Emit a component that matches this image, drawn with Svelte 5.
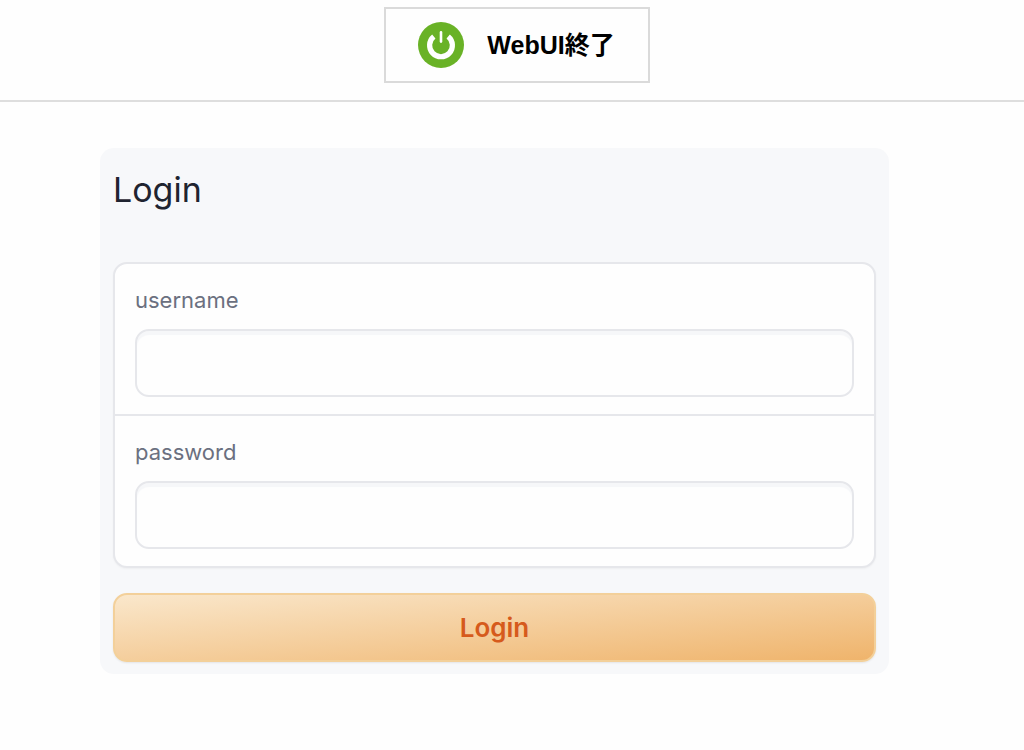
<script lang="ts">
  let username = $state('');
  let password = $state('');

  const submit = (event: SubmitEvent) => {
    event.preventDefault();
  };
</script>

<header>
  <button class="quit" type="button">
    <svg width="46" height="46" viewBox="0 0 46 46" aria-hidden="true">
      <circle cx="23" cy="23" r="23" fill="#69b226" />
      <path
        d="M15.8 14.5 A11.4 11.4 0 1 0 30.2 14.5"
        fill="none"
        stroke="#fff"
        stroke-width="5.2"
      />
      <path d="M23 10.4 V19.6" stroke="#fff" stroke-width="2.6" stroke-linecap="round" />
    </svg>
    <span>WebUI終了</span>
  </button>
</header>

<main>
  <form class="panel" onsubmit={submit}>
    <h2>Login</h2>

    <div class="fields">
      <div class="field">
        <label for="username">username</label>
        <input id="username" type="text" bind:value={username} />
      </div>
      <div class="field">
        <label for="password">password</label>
        <input id="password" type="password" bind:value={password} />
      </div>
    </div>

    <button class="login" type="submit">Login</button>
  </form>
</main>

<style>
  :global(body) {
    margin: 0;
    background: #fefefe;
    font-family: Inter, 'Noto Sans CJK JP', sans-serif;
  }

  header {
    display: flex;
    justify-content: center;
    padding: 7px 0 17px 10px;
    border-bottom: 2px solid #dedede;
  }

  .quit {
    display: flex;
    align-items: center;
    gap: 23px;
    box-sizing: border-box;
    height: 76px;
    padding: 0 33px 0 32px;
    border: 2px solid #dadada;
    background: #fefefe;
    color: #000;
    font-family: 'Liberation Sans', 'Noto Sans CJK JP', sans-serif;
    font-size: 25px;
    font-weight: 700;
    line-height: 32px;
    cursor: pointer;
  }

  main {
    padding: 46px 135px 46px 100px;
  }

  .panel {
    padding: 14px 13px 12px;
    border-radius: 14px;
    background: #f7f8fa;
  }

  h2 {
    margin: 0 0 44px;
    color: #1f2430;
    font-size: 34px;
    font-weight: 400;
    line-height: 56px;
  }

  .fields {
    border: 2px solid #e6e7eb;
    border-radius: 14px;
    background: #fefefe;
    box-shadow: 0 1px 2px rgba(0, 0, 0, 0.04);
  }

  .field {
    padding: 19px 20px 17px;
  }

  .field + .field {
    border-top: 2px solid #e6e7eb;
  }

  label {
    display: block;
    margin-bottom: 12px;
    color: #6b7080;
    font-size: 22px;
    line-height: 34px;
  }

  input {
    display: block;
    box-sizing: border-box;
    width: 100%;
    height: 68px;
    padding: 0 18px;
    border: 2px solid #e6e7eb;
    border-radius: 14px;
    background: #fefefe;
    box-shadow: inset 0 4px 1px #f6f7f9;
    color: #1f2430;
    font: inherit;
    font-size: 22px;
  }

  .login {
    display: block;
    box-sizing: border-box;
    width: 100%;
    height: 69px;
    margin-top: 25px;
    border: 2px solid #f3d09a;
    border-radius: 14px;
    background: linear-gradient(to bottom right, #fae8cd, #efb36a) border-box;
    box-shadow: 0 1px 2px rgba(0, 0, 0, 0.08);
    color: #d65a1c;
    font: inherit;
    font-size: 26px;
    font-weight: 600;
    cursor: pointer;
  }
</style>
